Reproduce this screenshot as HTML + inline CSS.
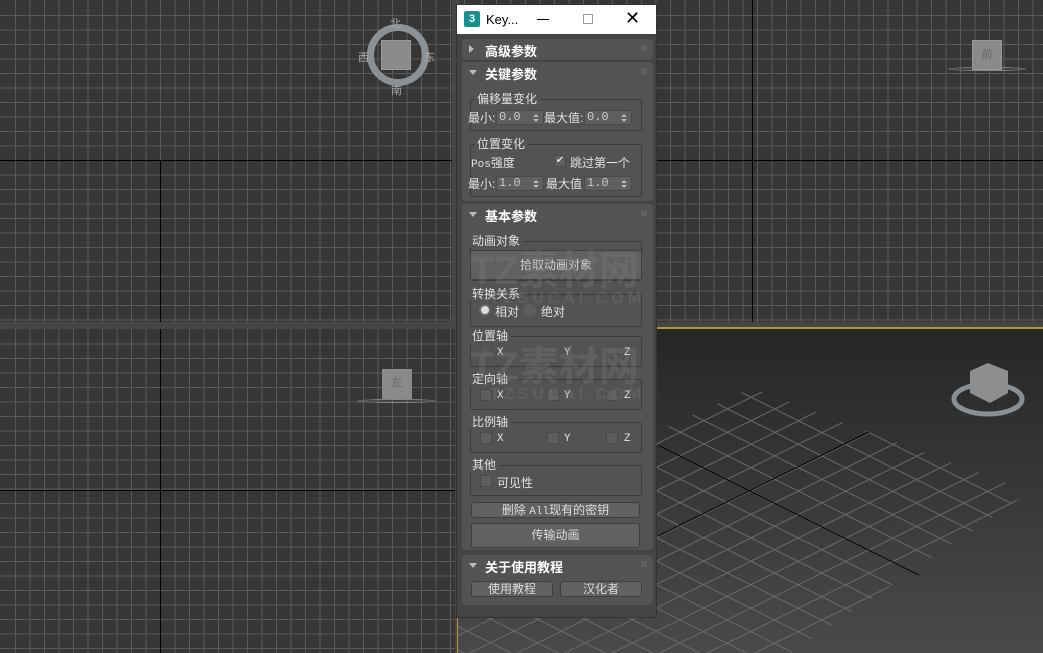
<!DOCTYPE html>
<html><head><meta charset="utf-8"><style>
*{margin:0;padding:0;box-sizing:border-box}
body{width:1043px;height:653px;overflow:hidden;background:#464646;position:relative;font-family:"Liberation Sans","Noto Sans CJK SC",sans-serif;font-size:12px;color:#e2e2e2}
.vp{position:absolute;background-color:#363636;
background-image:repeating-linear-gradient(90deg,transparent 0,transparent 13.5px,#5a5a5a 13.5px,#5a5a5a 14.5px),repeating-linear-gradient(180deg,transparent 0,transparent 13.5px,#5a5a5a 13.5px,#5a5a5a 14.5px);overflow:hidden}
.bl{position:absolute;background:#000}
.a{position:absolute;white-space:nowrap}
.dlg{position:absolute;left:456px;top:4px;width:201px;height:614px;background:#444;border:1px solid #333}
.roll{position:absolute;left:5px;width:191px;background:#535353;border-radius:3px}
.hd{position:absolute;left:23px;font-weight:bold;font-size:13px;color:#fff}
.tri{position:absolute;left:7px;width:0;height:0}
.dots{position:absolute;right:6px;top:6px;width:6px;height:6px;background-image:radial-gradient(#888 40%,transparent 41%);background-size:2px 2px}
.grp{position:absolute;left:8px;width:172px;border:1px solid #3a3a3a;border-radius:3px}
.gl{position:absolute;background:#535353;padding:0 3px;line-height:14px}
.fld{position:absolute;height:15px;background:#5f5f5f;border:1px solid #4a4a4a;font-family:"Liberation Mono",monospace;font-size:12px;line-height:13px;padding-left:2px;color:#ccc}
.fld:after{content:"";position:absolute;right:4px;top:3px;width:0;height:0;border-left:3px solid transparent;border-right:3px solid transparent;border-bottom:3px solid #bbb}
.fld:before{content:"";position:absolute;right:4px;top:8px;width:0;height:0;border-left:3px solid transparent;border-right:3px solid transparent;border-top:3px solid #bbb}
.cb{position:absolute;width:12px;height:12px;background:#5e5e5e;border:1px solid #4a4a4a}
.btn{position:absolute;background:#616161;border:1px solid #3e3e3e;border-radius:3px;text-align:center;color:#ddd}
.m{font-family:"Liberation Mono",monospace;font-size:11px}
</style></head><body>
<div class="vp" style="left:0;top:0;width:452px;height:322px;background-position:1.5px 1.5px">
 <div class="bl" style="left:0;top:160px;width:452px;height:1px"></div>
 <div class="bl" style="left:160px;top:160px;width:1px;height:162px"></div>
</div>
<div class="vp" style="left:460px;top:0;width:583px;height:322px;background-position:8px 1.5px">
 <div class="bl" style="left:0;top:160px;width:583px;height:1px"></div>
 <div class="bl" style="left:292px;top:0;width:1px;height:322px"></div>
</div>
<div class="vp" style="left:0;top:329px;width:455px;height:324px;background-position:1.5px 1px">
 <div class="bl" style="left:0;top:161px;width:455px;height:1px"></div>
 <div class="bl" style="left:160px;top:0;width:1px;height:324px"></div>
</div>
<div style="position:absolute;left:457px;top:327px;width:586px;height:326px;overflow:hidden;border-top:2px solid #b8962e;border-left:1px solid #b8962e;background:linear-gradient(#262626,#4a4a4a)">
<svg width="586" height="326" style="position:absolute;left:0;top:0">
<defs><clipPath id="c"><polygon points="293,59 572,163 330,326 -10,326 -10,200"/></clipPath></defs>
<g clip-path="url(#c)" stroke="#6a6a6a" stroke-width="1" id="grid"></g>
<line x1="200" y1="116" x2="461" y2="246" stroke="#000"/>
<line x1="200" y1="207" x2="411" y2="103" stroke="#000"/>
<ellipse cx="530" cy="70" rx="34" ry="15" fill="none" stroke="#8a8f94" stroke-width="5"/>
<polygon points="512,42 530,34 550,42 550,64 532,74 512,64" fill="#8e8e8e"/>
</svg></div>
<script>
var g=document.getElementById('grid'),s='';
for(var k=-25;k<=25;k++){var o=k*21;
var nx=-0.446,ny=0.895,dx=0.895,dy=0.446,cx=293+nx*o,cy=162+ny*o;
s+='<line x1="'+(cx-dx*700)+'" y1="'+(cy-dy*700)+'" x2="'+(cx+dx*700)+'" y2="'+(cy+dy*700)+'"/>';
var mx=0.442,my=0.897,ex=0.897,ey=-0.442,c2x=293+mx*o,c2y=162+my*o;
s+='<line x1="'+(c2x-ex*700)+'" y1="'+(c2y-ey*700)+'" x2="'+(c2x+ex*700)+'" y2="'+(c2y+ey*700)+'"/>';}
g.innerHTML=s;
</script>
<div style="position:absolute;left:367px;top:24px;width:62px;height:62px;border-radius:50%;border:7px solid #8c9196"></div>
<div style="position:absolute;left:381px;top:40px;width:30px;height:30px;background:#8a8a8a;border:1px solid #999"></div>
<div class="a" style="left:390px;top:15px;color:#aaa;font-size:11px">北</div>
<div class="a" style="left:358px;top:49px;color:#aaa;font-size:11px">西</div>
<div class="a" style="left:424px;top:49px;color:#aaa;font-size:11px">东</div>
<div class="a" style="left:391px;top:82px;color:#aaa;font-size:11px">南</div>
<div style="position:absolute;left:972px;top:40px;width:30px;height:30px;background:#8a8a8a;border:1px solid #999;color:#666;font-size:11px;text-align:center;line-height:28px">前</div>
<div style="position:absolute;left:948px;top:67px;width:78px;height:4px;border-radius:50%;border:1px solid #888"></div>
<div style="position:absolute;left:382px;top:369px;width:30px;height:30px;background:#8a8a8a;color:#666;font-size:11px;text-align:center;line-height:28px">左</div>
<div style="position:absolute;left:358px;top:399px;width:78px;height:4px;border-radius:50%;border:1px solid #888"></div>
<div class="dlg">
 <div style="position:absolute;left:0;top:0;width:199px;height:29px;background:#fff">
  <div style="position:absolute;left:7px;top:6px;width:16px;height:16px;background:#1a8f8f;border-radius:2px;color:#fff;font-size:11px;font-weight:bold;text-align:center;line-height:16px">3</div>
  <div class="a" style="left:29px;top:7px;color:#000;font-size:13px">Key...</div>
  <div style="position:absolute;left:80px;top:14px;width:12px;height:1px;background:#000"></div>
  <div style="position:absolute;left:126px;top:9px;width:10px;height:10px;border:1px solid #999"></div>
  <div class="a" style="left:168px;top:3px;color:#000;font-size:18px;font-weight:100">✕</div>
 </div>
 <div class="roll" style="top:34px;height:21px"><div class="tri" style="top:6px;border-top:4px solid transparent;border-bottom:4px solid transparent;border-left:5px solid #bbb"></div><div class="hd" style="top:2px">高级参数</div><div class="dots"></div></div>
 <div class="roll" style="top:57px;height:139px"><div class="tri" style="top:8px;border-left:4px solid transparent;border-right:4px solid transparent;border-top:5px solid #bbb"></div><div class="hd" style="top:2px">关键参数</div><div class="dots"></div>
  <div class="grp" style="top:37px;height:32px"></div><div class="gl" style="top:30px;left:12px">偏移量变化</div>
  <div class="a" style="left:6px;top:47px">最小:</div><div class="fld" style="left:34px;top:48px;width:48px">0.0</div>
  <div class="a" style="left:82px;top:47px">最大值:</div><div class="fld" style="left:122px;top:48px;width:48px">0.0</div>
  <div class="grp" style="top:82px;height:53px"></div><div class="gl" style="top:75px;left:12px">位置变化</div>
  <div class="a" style="left:9px;top:92px"><span class="m">Pos</span>强度</div>
  <div class="cb" style="left:92px;top:93px;color:#ddd;font-size:10px;line-height:10px;text-align:center">✔</div><div class="a" style="left:108px;top:92px">跳过第一个</div>
  <div class="a" style="left:6px;top:113px">最小:</div><div class="fld" style="left:34px;top:114px;width:48px">1.0</div>
  <div class="a" style="left:84px;top:113px">最大值</div><div class="fld" style="left:122px;top:114px;width:48px">1.0</div>
 </div>
 <div class="roll" style="top:199px;height:346px"><div class="tri" style="top:8px;border-left:4px solid transparent;border-right:4px solid transparent;border-top:5px solid #bbb"></div><div class="hd" style="top:2px">基本参数</div><div class="dots"></div>
  <div class="grp" style="top:37px;height:40px"></div><div class="gl" style="top:30px;left:7px">动画对象</div>
  <div class="btn" style="left:8px;top:46px;width:172px;height:30px;line-height:28px;border-radius:2px">拾取动画对象</div>
  <div class="grp" style="top:90px;height:33px"></div><div class="gl" style="top:83px;left:7px">转换关系</div>
  <div style="position:absolute;left:17px;top:100px;width:12px;height:12px;border-radius:50%;background:#ddd;border:2px solid #666"></div><div class="a" style="left:33px;top:99px">相对</div>
  <div style="position:absolute;left:62px;top:100px;width:12px;height:12px;border-radius:50%;background:#5e5e5e"></div><div class="a" style="left:79px;top:99px">绝对</div>
  <div class="grp" style="top:132px;height:31px"></div><div class="gl" style="top:125px;left:7px">位置轴</div>
  <div class="cb" style="left:18px;top:142px;opacity:.5"></div><div class="a m" style="left:35px;top:143px">X</div>
  <div class="cb" style="left:85px;top:142px;opacity:.5"></div><div class="a m" style="left:102px;top:143px">Y</div>
  <div class="cb" style="left:144px;top:142px;opacity:.5"></div><div class="a m" style="left:162px;top:143px">Z</div>
  <div class="grp" style="top:175px;height:31px"></div><div class="gl" style="top:168px;left:7px">定向轴</div>
  <div class="cb" style="left:18px;top:185px"></div><div class="a m" style="left:35px;top:186px">X</div>
  <div class="cb" style="left:85px;top:185px"></div><div class="a m" style="left:102px;top:186px">Y</div>
  <div class="cb" style="left:144px;top:185px"></div><div class="a m" style="left:162px;top:186px">Z</div>
  <div class="grp" style="top:218px;height:31px"></div><div class="gl" style="top:211px;left:7px">比例轴</div>
  <div class="cb" style="left:18px;top:228px"></div><div class="a m" style="left:35px;top:229px">X</div>
  <div class="cb" style="left:85px;top:228px"></div><div class="a m" style="left:102px;top:229px">Y</div>
  <div class="cb" style="left:144px;top:228px"></div><div class="a m" style="left:162px;top:229px">Z</div>
  <div class="grp" style="top:261px;height:31px"></div><div class="gl" style="top:254px;left:7px">其他</div>
  <div class="cb" style="left:18px;top:271px"></div><div class="a" style="left:35px;top:270px">可见性</div>
  <div class="btn" style="left:9px;top:298px;width:169px;height:16px;line-height:14px">删除 <span class="m">All</span>现有的密钥</div>
  <div class="btn" style="left:9px;top:319px;width:169px;height:25px;line-height:23px">传输动画</div>
 </div>
 <div class="roll" style="top:550px;height:50px"><div class="tri" style="top:8px;border-left:4px solid transparent;border-right:4px solid transparent;border-top:5px solid #bbb"></div><div class="hd" style="top:2px">关于使用教程</div><div class="dots"></div>
  <div class="btn" style="left:9px;top:26px;width:82px;height:16px;line-height:14px">使用教程</div>
  <div class="btn" style="left:98px;top:26px;width:82px;height:16px;line-height:14px">汉化者</div>
 </div>
</div>
<div class="a" style="left:470px;top:238px;font-size:40px;font-weight:bold;color:rgba(120,120,120,.35)">TZ素材网</div>
<div class="a" style="left:490px;top:290px;font-size:16px;font-weight:bold;letter-spacing:4px;color:rgba(120,120,120,.35)">TZSUCAI.COM</div>
<div class="a" style="left:470px;top:334px;font-size:40px;font-weight:bold;color:rgba(120,120,120,.35)">TZ素材网</div>
<div class="a" style="left:490px;top:386px;font-size:16px;font-weight:bold;letter-spacing:4px;color:rgba(120,120,120,.35)">TZSUCAI.COM</div>
</body></html>
